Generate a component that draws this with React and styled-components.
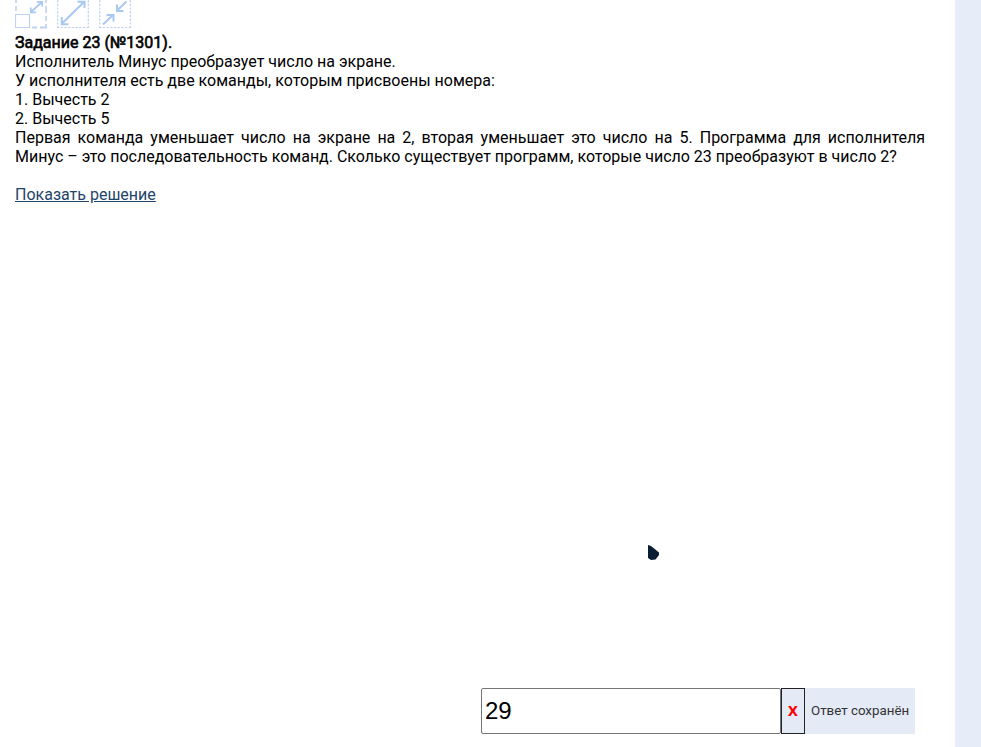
import React from "react";
import styled, { createGlobalStyle } from "styled-components";

const GlobalStyle = createGlobalStyle`
  * { box-sizing: border-box; }
  body { margin: 0; background: #e6edf9; overflow: hidden; }
`;

const Page = styled.main`
  position: relative;
  display: flex;
  flex-direction: column;
  justify-content: space-between;
  width: 955px;
  height: 747px;
  padding: 0 30px 13px 15px;
  background: #fff;
  color: #000;
  font: 16px/19px Roboto, sans-serif;
`;

const Toolbar = styled.div`
  display: flex;
  gap: 10px;
  height: 33px;
`;

const ToolIcon = styled.svg`
  display: block;
  width: 32px;
  height: 29px;
  fill: none;
  stroke: #a9c8f2;
`;

const Frame = styled.path`
  stroke: #bdd2f1;
`;

const Title = styled.h1`
  margin: 0;
  font-size: 16px;
  font-weight: 400;
  -webkit-text-stroke: 0.6px #000;
`;

const Line = styled.p`
  margin: 0;
  text-align: ${(p) => (p.$justify ? "justify" : "left")};
`;

const SolutionLink = styled.a`
  display: inline-block;
  margin-top: 19px;
  color: #1f4468;
  text-decoration: underline;
`;

const AnswerBar = styled.form`
  display: flex;
  align-self: flex-end;
  height: 46px;
  margin-right: 10px;
`;

const AnswerInput = styled.input`
  width: 300px;
  padding: 0 3px;
  border: 1px solid #767676;
  border-radius: 2px;
  background: #fff;
  color: #000;
  font: 24px "Liberation Sans", Arial, sans-serif;
  outline: none;
`;

const ClearButton = styled.button`
  width: 24px;
  padding: 0;
  border: 1px solid #222;
  background: #e4eaf6;
  color: #f00;
  font: bold 13.33px "DejaVu Sans", Verdana, sans-serif;
`;

const SavedStatus = styled.div`
  display: flex;
  align-items: center;
  width: 110px;
  padding: 0 0 2px 6px;
  background: #e4eaf6;
  color: #333;
  font-size: 13.33px;
  white-space: nowrap;
`;

const Pointer = styled.svg`
  position: absolute;
  left: 648px;
  top: 545px;
  width: 12px;
  height: 15px;
`;

export default function App() {
  return (
    <>
      <GlobalStyle />
      <Page>
        <section>
          <Toolbar>
            <ToolIcon viewBox="0 0 32 29">
              <Frame d="M1 0V3M1 6V11M31 0V3M31 6V13M31 16V21M31 24V28" strokeWidth="1.6" />
              <Frame d="M17 27.5H22M25 27.5H32" strokeWidth="1.8" />
              <Frame d="M.5 14.5H14.5V27.5H.5Z" strokeWidth="1.2" />
              <path d="M16 12L27 2M15.8 7.5V12.3H21M22 1.8H27.2V6.5" strokeWidth="1.7" />
            </ToolIcon>
            <ToolIcon viewBox="0 0 32 29">
              <Frame d="M.7 0V28M31.3 0V28M0 27.5H32" strokeWidth="1.2" strokeDasharray="2.4 1.3" />
              <path d="M4.5 24L27.5 1.5M4.8 17V24.2H11.5M20.5 1.8H27.5V8" strokeWidth="2" />
            </ToolIcon>
            <ToolIcon viewBox="0 0 32 29">
              <Frame d="M.7 0V28M31.3 0V28M0 27.5H32" strokeWidth="1.2" strokeDasharray="2.4 1.3" />
              <path d="M4 24.5L14 15M7.5 15H14.5V21.5M27.5 1.5L18 10.5M18 4.5V11H24.5" strokeWidth="2" />
            </ToolIcon>
          </Toolbar>
          <Title>Задание 23 (№1301).</Title>
          <Line>Исполнитель Минус преобразует число на экране.</Line>
          <Line>У исполнителя есть две команды, которым присвоены номера:</Line>
          <Line>1. Вычесть 2</Line>
          <Line>2. Вычесть 5</Line>
          <Line $justify>
            Первая команда уменьшает число на экране на 2, вторая уменьшает это число на 5.
            Программа для исполнителя Минус – это последовательность команд. Сколько
            существует программ, которые число 23 преобразуют в число 2?
          </Line>
          <SolutionLink href="#">Показать решение</SolutionLink>
        </section>
        <AnswerBar>
          <AnswerInput defaultValue="29" />
          <ClearButton type="button">X</ClearButton>
          <SavedStatus>Ответ сохранён</SavedStatus>
        </AnswerBar>
        <Pointer viewBox="0 0 12 15">
          <path d="M0 0L3 1L11 7.5V10L7.5 14.5L3 15L0 13Z" fill="#0b1d35" />
        </Pointer>
      </Page>
    </>
  );
}
